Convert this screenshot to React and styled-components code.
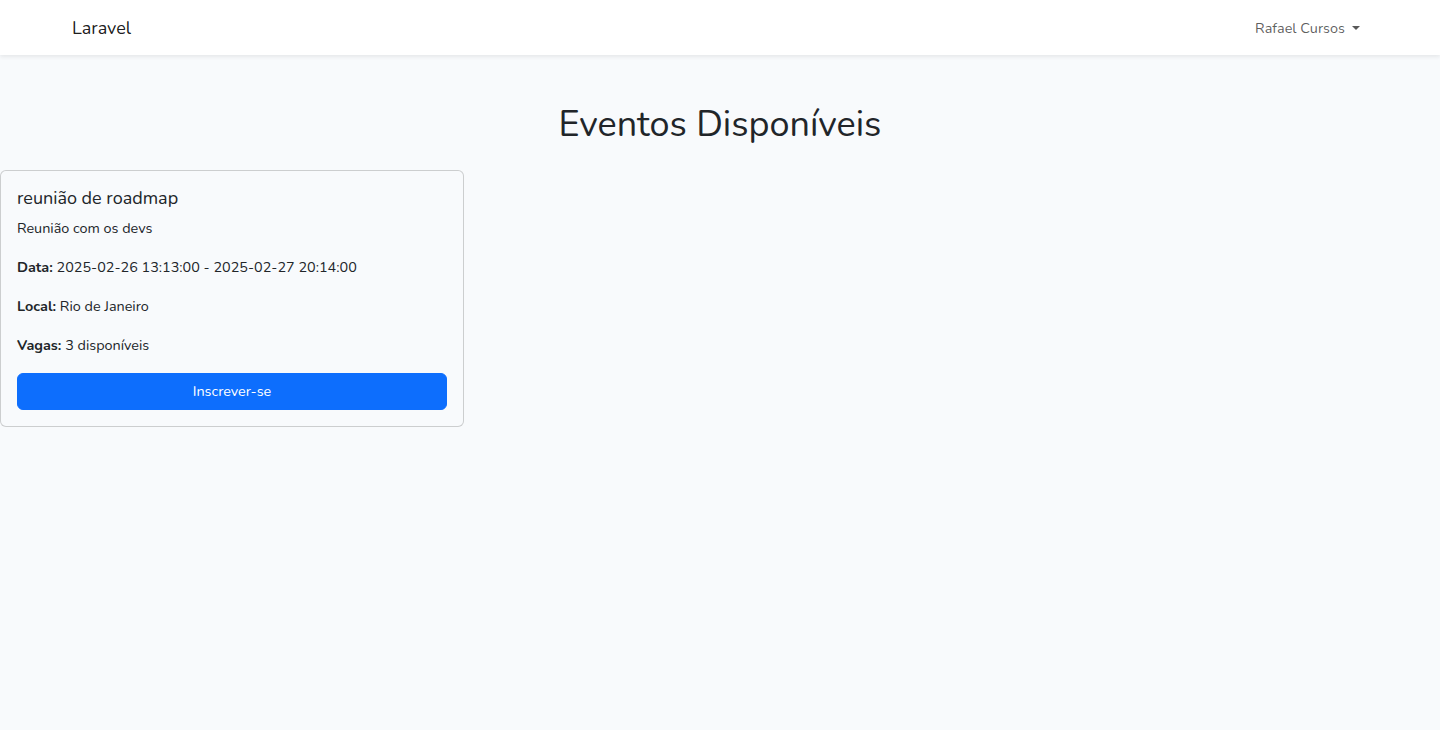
import React from 'react'
import styled, { createGlobalStyle } from 'styled-components'

const GlobalStyle = createGlobalStyle`
  *, *::before, *::after {
    box-sizing: border-box;
  }
  html, body {
    margin: 0;
    padding: 0;
  }
  body {
    font-family: Nunito, Lato, "Noto Sans", sans-serif;
    font-size: 14.4px;
    line-height: 1.6;
    color: #212529;
    background: #f8fafc;
    min-height: 730px;
  }
`

// Navbar
const Navbar = styled.nav`
  background: #fff;
  box-shadow: 0 2px 4px rgba(0, 0, 0, 0.075);
  padding: 8px 0;
  position: relative;
  z-index: 1;
`

const NavContainer = styled.div`
  width: 1320px;
  margin: 0 auto;
  padding: 0 12px;
  display: flex;
  align-items: center;
  justify-content: space-between;
`

const Brand = styled.a`
  font-size: 18px;
  line-height: 1.6;
  padding: 6px 0 4px;
  color: rgba(0, 0, 0, 0.9);
  text-decoration: none;
`

const NavLink = styled.a`
  color: rgba(0, 0, 0, 0.65);
  text-decoration: none;
  padding: 9px 8px 7px;
  display: flex;
  align-items: center;

  &::after {
    content: '';
    display: inline-block;
    margin-left: 0.5em;
    border-top: 0.3em solid;
    border-right: 0.3em solid transparent;
    border-left: 0.3em solid transparent;
    border-bottom: 0;
    transform: translateY(-1px);
  }
`

// Page
const Main = styled.main`
  padding: 24px 0;
`

const Section = styled.div`
  margin-top: 24px;
`

const PageTitle = styled.h1`
  margin: 0 0 24px;
  font-size: 36px;
  font-weight: 400;
  line-height: 1.2;
  text-align: center;
`

const Row = styled.div`
  display: flex;
  flex-wrap: wrap;
  margin: 0 -12px;
`

const Col = styled.div`
  width: 33.3333%;
  padding: 0 12px;
`

const Card = styled.div`
  border: 1px solid rgba(0, 0, 0, 0.175);
  border-radius: 6px;
  background: #f8fafc;
`

const CardBody = styled.div`
  padding: 16px;
`

const CardTitle = styled.h5`
  margin: 0 0 8px;
  padding-top: 1px;
  margin-bottom: 7px;
  font-size: 18px;
  font-weight: 400;
  line-height: 1.2;
`

const CardText = styled.p`
  margin: 0 0 16px;
`

const Button = styled.button`
  display: block;
  width: 100%;
  padding: 6px 12px;
  font-family: inherit;
  font-size: 14.4px;
  line-height: 1.6;
  color: #fff;
  background: #0d6efd;
  border: 1px solid #0d6efd;
  border-radius: 6px;
  cursor: pointer;
`

const eventos = [
  {
    titulo: 'reunião de roadmap',
    descricao: 'Reunião com os devs',
    inicio: '2025-02-26 13:13:00',
    fim: '2025-02-27 20:14:00',
    local: 'Rio de Janeiro',
    vagas: 3,
  },
]

const App = () => (
  <>
    <GlobalStyle />
    <Navbar>
      <NavContainer>
        <Brand href="#">Laravel</Brand>
        <NavLink href="#">Rafael Cursos</NavLink>
      </NavContainer>
    </Navbar>
    <Main>
      <Section>
        <PageTitle>Eventos Disponíveis</PageTitle>
        <Row>
          {eventos.map((e) => (
            <Col key={e.titulo}>
              <Card>
                <CardBody>
                  <CardTitle>{e.titulo}</CardTitle>
                  <CardText>{e.descricao}</CardText>
                  <CardText>
                    <strong>Data:</strong> {e.inicio} - {e.fim}
                  </CardText>
                  <CardText>
                    <strong>Local:</strong> {e.local}
                  </CardText>
                  <CardText>
                    <strong>Vagas:</strong> {e.vagas} disponíveis
                  </CardText>
                  <Button>Inscrever-se</Button>
                </CardBody>
              </Card>
            </Col>
          ))}
        </Row>
      </Section>
    </Main>
  </>
)

export default App
